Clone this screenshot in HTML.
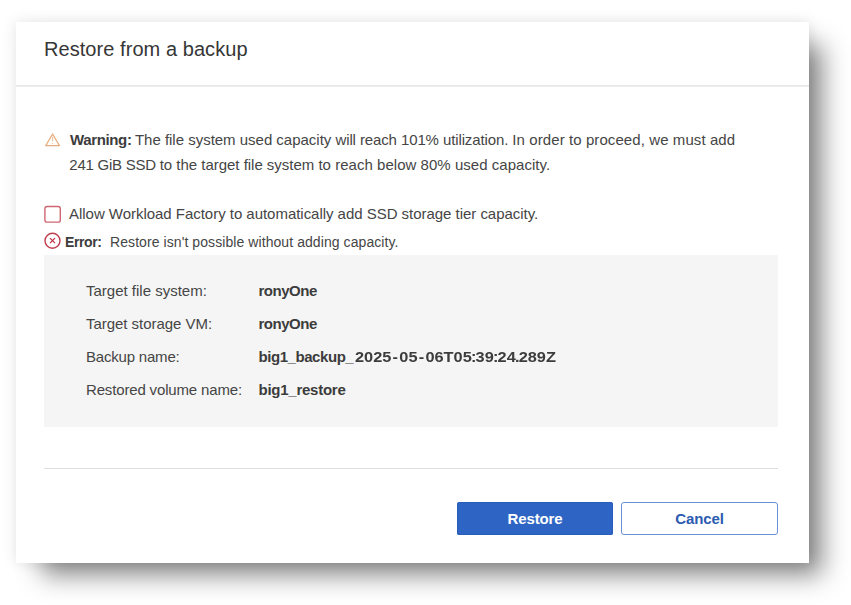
<!DOCTYPE html>
<html><head><meta charset="utf-8">
<style>
html,body{margin:0;padding:0;background:#fff;}
body{width:851px;height:605px;overflow:hidden;position:relative;font-family:"Liberation Sans",sans-serif;color:#444;}
#dlg{position:absolute;left:16px;top:22px;width:792.5px;height:541px;background:#fff;
 box-shadow:0 0 14px rgba(0,0,0,.11);}
#shadow{position:absolute;left:42px;top:45px;width:780px;height:530px;background:rgba(0,0,0,.47);filter:blur(13px);}
#title{position:absolute;left:28px;top:15px;font-size:20px;line-height:24px;color:#363636;white-space:nowrap;letter-spacing:.06px;}
#hr1{position:absolute;left:0;top:63px;width:793px;height:2px;background:linear-gradient(#e8e8e8 50%,#eeeeee 50%);}
.t{position:absolute;white-space:nowrap;font-size:15px;line-height:18px;color:#454545;}
b{color:#3c3c3c}
#box{position:absolute;left:28px;top:233px;width:734px;height:172px;background:#f5f5f5;}
#hr2{position:absolute;left:28px;top:446px;width:734px;height:1px;background:#dedede;}
#bres{position:absolute;left:441px;top:480px;width:156px;height:33px;background:#2e65c4;box-shadow:inset 0 0 0 1px #2a5dba;border-radius:2.5px;color:#fff;font-weight:bold;font-size:15px;line-height:33px;text-align:center;}
#bcan{position:absolute;left:605px;top:480px;width:155px;height:31px;border:1px solid #6a8fd6;border-radius:3px;color:#2b5bb0;font-weight:bold;font-size:15px;line-height:31px;text-align:center;background:#fff;}
svg{position:absolute;overflow:visible}
.h{margin:0 1.15px}.c{margin:0 -.75px}
</style></head><body>
<div id="shadow"></div>
<div id="dlg">
 <div id="title">Restore from a backup</div>
 <div id="hr1"></div>
 <svg id="warn" style="left:0;top:0" width="60" height="130"><path d="M36.6 112 L43.5 123.7 H29.7 Z" fill="none" stroke="#e5aa7b" stroke-width="1.25" stroke-linejoin="round"/><path d="M36.6 114.8V119.2" stroke="#ecc09c" stroke-width="1.1"/><circle cx="36.6" cy="121.3" r=".6" fill="#ecc09c"/></svg>
 <div class="t" id="w1" style="left:54px;top:109px"><b id="w1b" style="letter-spacing:-.36px">Warning:</b> <span id="w1r" style="margin-left:-.8px;letter-spacing:-.014px">The file system used capacity <span style="letter-spacing:-.11px">will reach 101% utilization. </span><span style="letter-spacing:.085px">In order to proceed, we must add</span></span></div>
 <div class="t" id="w2" style="left:53.3px;top:134px;letter-spacing:-.02px"><span style="letter-spacing:-.25px">241 GiB SSD </span><span>to the target file system </span><span id="w2c" style="letter-spacing:.03px">to reach below 80% used capacity.</span></div>
 <svg id="chk" style="left:0;top:0" width="60" height="210"><rect x="28.9" y="184.5" width="15.4" height="15.6" rx="2.2" fill="#fff" stroke="#cd6872" stroke-width="1.4"/></svg>
 <div class="t" id="c1" style="left:53px;top:183px;letter-spacing:-.03px">Allow Workload Factory to automatically add SSD storage tier capacity.</div>
 <svg id="err" style="left:0;top:0" width="60" height="240"><circle cx="36.5" cy="218.7" r="7.5" fill="none" stroke="#bf3f50" stroke-width="1.4"/><path d="M34 216.2L39 221.2M39 216.2L34 221.2" stroke="#c02f42" stroke-width="1.2"/></svg>
 <div class="t" id="e1" style="left:49px;top:210.5px;font-size:14px"><b id="e1b" style="letter-spacing:-.4px">Error:</b><span id="e1r" style="letter-spacing:.077px;margin-left:8.5px">Restore isn't possible without adding capacity.</span></div>
 <div id="box"></div>
 <div class="t" id="l1" style="left:70px;top:260px">Target file system:</div><div class="t" id="v1" style="left:242.5px;top:260px;letter-spacing:-.47px"><b>ronyOne</b></div>
 <div class="t" id="l2" style="left:70px;top:293px;letter-spacing:-.04px">Target storage VM:</div><div class="t" id="v2" style="left:242.5px;top:293px;letter-spacing:-.47px"><b>ronyOne</b></div>
 <div class="t" id="l3" style="left:70px;top:326px;letter-spacing:-.2px">Backup name:</div><div class="t" id="v3" style="left:242.5px;top:326px"><b><span id="v3a" style="letter-spacing:-.44px">big1_backup_</span></b></div><div class="t" id="v3b" style="left:339.3px;top:326px;transform-origin:0 0;transform:scaleX(1.0895)"><b>2025<span class="h">-</span>05<span class="h">-</span>06T05<span class="c">:</span>39<span class="c">:</span>24<span class="c">.</span>289Z</b></div>
 <div class="t" id="l4" style="left:70px;top:359px;letter-spacing:-.157px">Restored volume name:</div><div class="t" id="v4" style="left:242.5px;top:359px;letter-spacing:-.25px"><b>big1_restore</b></div>
 <div id="hr2"></div>
 <div id="bres"><span id="bres_t" style="letter-spacing:-.15px">Restore</span></div>
 <div id="bcan"><span id="bcan_t" style="letter-spacing:-.1px">Cancel</span></div>
</div>
</body></html>
